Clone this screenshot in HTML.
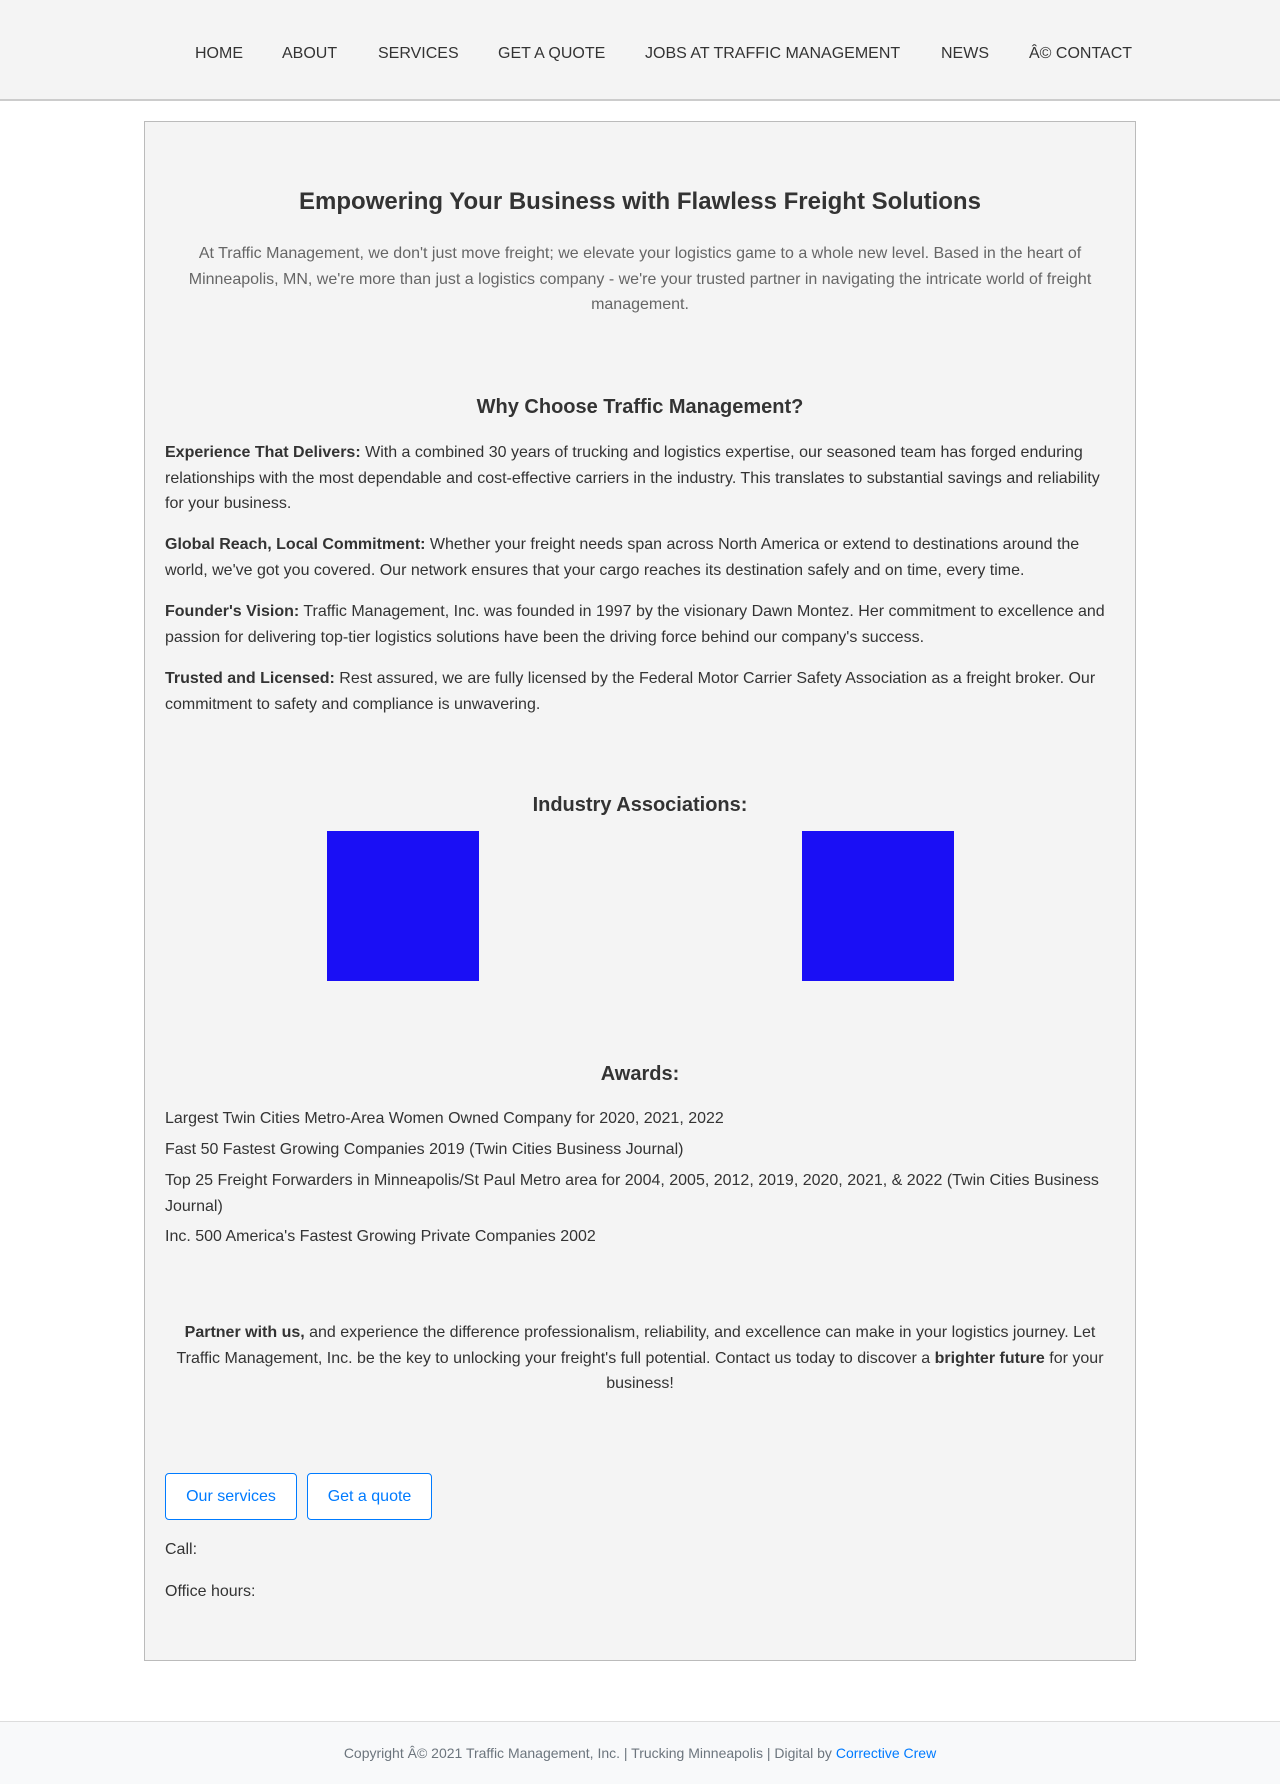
<!DOCTYPE html>
<html><head><meta charset="utf-8"><style>
*{margin:0;padding:0;box-sizing:border-box}
body{width:1280px;height:1784px;position:relative;background:#fff;font-family:"Liberation Sans",Arial,sans-serif;color:#333;font-size:16px;overflow:hidden}
.hdr{position:absolute;left:0;top:0;width:1280px;height:101px;background:#f4f4f4;border-bottom:2px solid #ccc}
.nav{position:absolute;top:45px;font-size:16px;color:#333;white-space:nowrap}
.box{position:absolute;left:144px;top:121px;width:992px;height:1540px;background:#f4f4f4;border:1px solid #bbb}
.t{position:absolute;left:165px;width:950px;line-height:25.5px}
.c{text-align:center}
h2{position:absolute;left:144px;width:992px;text-align:center;font-size:24px;font-weight:bold}
h3{position:absolute;left:144px;width:992px;text-align:center;font-size:20px;font-weight:bold}
.blue{position:absolute;width:152px;height:150px;background:#1a0ff5}
.btn{position:absolute;top:1473px;height:47px;border:1px solid #007bff;border-radius:4px;background:#fff;color:#007bff;font-size:16px;line-height:46px;text-align:center}
.ft{position:absolute;left:0;top:1721px;width:1280px;height:63px;background:#f8f9fa;border-top:1px solid #ddd;text-align:center;font-size:14px;color:#6c757d;line-height:62px}
</style></head><body>
<div class="hdr">
<span class="nav" style="left:195px">HOME</span>
<span class="nav" style="left:282px">ABOUT</span>
<span class="nav" style="left:378px">SERVICES</span>
<span class="nav" style="left:498px">GET A QUOTE</span>
<span class="nav" style="left:645px">JOBS AT TRAFFIC MANAGEMENT</span>
<span class="nav" style="left:941px">NEWS</span>
<span class="nav" style="left:1029px">Â© CONTACT</span>
</div>
<div class="box"></div>
<h2 style="top:188px">Empowering Your Business with Flawless Freight Solutions</h2>
<div class="t c" style="top:241px;color:#666;left:175px;width:930px">At Traffic Management, we don't just move freight; we elevate your logistics game to a whole new level. Based in the heart of Minneapolis, MN, we're more than just a logistics company - we're your trusted partner in navigating the intricate world of freight management.</div>
<h3 style="top:396px">Why Choose Traffic Management?</h3>
<div class="t" style="top:440px"><b>Experience That Delivers:</b> With a combined 30 years of trucking and logistics expertise, our seasoned team has forged enduring relationships with the most dependable and cost-effective carriers in the industry. This translates to substantial savings and reliability for your business.</div>
<div class="t" style="top:532px"><b>Global Reach, Local Commitment:</b> Whether your freight needs span across North America or extend to destinations around the world, we've got you covered. Our network ensures that your cargo reaches its destination safely and on time, every time.</div>
<div class="t" style="top:599px"><b>Founder's Vision:</b> Traffic Management, Inc. was founded in 1997 by the visionary Dawn Montez. Her commitment to excellence and passion for delivering top-tier logistics solutions have been the driving force behind our company's success.</div>
<div class="t" style="top:666px"><b>Trusted and Licensed:</b> Rest assured, we are fully licensed by the Federal Motor Carrier Safety Association as a freight broker. Our commitment to safety and compliance is unwavering.</div>
<h3 style="top:794px">Industry Associations:</h3>
<div class="blue" style="left:327px;top:831px"></div>
<div class="blue" style="left:802px;top:831px"></div>
<h3 style="top:1063px">Awards:</h3>
<div class="t" style="top:1106px">Largest Twin Cities Metro-Area Women Owned Company for 2020, 2021, 2022</div>
<div class="t" style="top:1137px">Fast 50 Fastest Growing Companies 2019 (Twin Cities Business Journal)</div>
<div class="t" style="top:1168px">Top 25 Freight Forwarders in Minneapolis/St Paul Metro area for 2004, 2005, 2012, 2019, 2020, 2021, &amp; 2022 (Twin Cities Business Journal)</div>
<div class="t" style="top:1224px">Inc. 500 America's Fastest Growing Private Companies 2002</div>
<div class="t c" style="top:1320px;left:170px;width:940px"><b>Partner with us,</b> and experience the difference professionalism, reliability, and excellence can make in your logistics journey. Let Traffic Management, Inc. be the key to unlocking your freight's full potential. Contact us today to discover a <b>brighter future</b> for your business!</div>
<div class="btn" style="left:165px;width:132px">Our services</div>
<div class="btn" style="left:307px;width:125px">Get a quote</div>
<div class="t" style="top:1537px">Call:</div>
<div class="t" style="top:1579px">Office hours:</div>
<div class="ft">Copyright Â© 2021 Traffic Management, Inc. | Trucking Minneapolis | Digital by <span style="color:#007bff">Corrective Crew</span></div>
</body></html>
